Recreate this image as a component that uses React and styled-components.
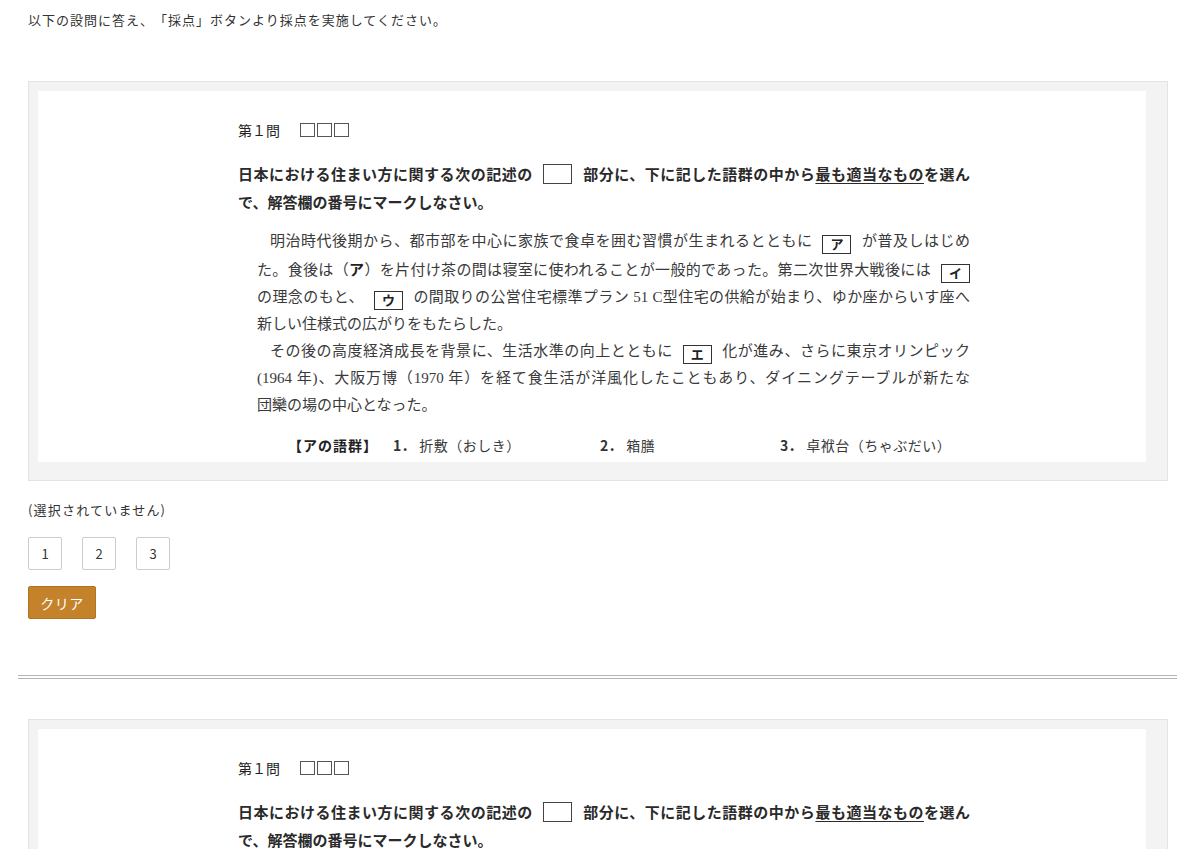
import React from "react";
import styled, { createGlobalStyle } from "styled-components";

const GlobalStyle = createGlobalStyle`
  body {
    margin: 8px;
    background: #fff;
    color: #333;
    font-family: "Noto Sans CJK JP", "Liberation Sans", sans-serif;
    text-spacing-trim: space-all;
  }
  * { box-sizing: border-box; }
`;

const Page = styled.div`
  padding: 0 16px 0 20px;
`;

const Lead = styled.p`
  margin: 0;
  font-size: 13px;
  line-height: 24px;
  color: #333;
  letter-spacing: 1px;
`;

const Frame = styled.div`
  margin-top: ${(p) => p.$top}px;
  border: 1px solid #e3e3e3;
  background: #f3f3f3;
  padding: 9px 21px 18px 9px;
`;

const Sheet = styled.div`
  width: 1108px;
  height: 371px;
  background: #fff;
  padding: 27px 0 0 200px;
  overflow: hidden;
`;

const Column = styled.div`
  width: 732px;
`;

const Heading = styled.div`
  font-size: 14px;
  line-height: 24px;
  color: #222;
  display: flex;
  align-items: center;
`;

const Squares = styled.span`
  margin-left: 20px;
  display: inline-flex;
  gap: 2px;
`;

const Square = styled.span`
  display: block;
  width: 15px;
  height: 14px;
  border: 1px solid #555;
`;

const Instruction = styled.div`
  margin-top: 18px;
  font-size: 15px;
  line-height: 28px;
  font-weight: 700;
  color: #2a2a2a;
`;

const Line = styled.div`
  text-align: justify;
  text-align-last: ${(p) => (p.$full ? "justify" : "left")};
  padding-left: ${(p) => (p.$indent ? 13 : 0)}px;
`;

const Underline = styled.span`
  text-decoration: underline;
  text-underline-offset: 3px;
`;

const BlankBox = styled.span`
  display: inline-block;
  width: 29px;
  height: 20px;
  margin: 0 11px 0 10px;
  border: 1px solid #444;
  vertical-align: -4px;
`;

const Passage = styled.div`
  margin-top: 12px;
  margin-left: 19px;
  width: 713px;
  font-family: "Liberation Serif", "Noto Sans CJK JP", serif;
  font-size: 15px;
  line-height: 27px;
  color: #3a3a3a;
`;

const LabelBox = styled.span`
  display: inline-block;
  width: 29px;
  height: 19px;
  margin: 0 ${(p) => (p.$end ? 0 : 10)}px 0 10px;
  border: 1.5px solid #333;
  font-family: "Noto Sans CJK JP", sans-serif;
  font-weight: 700;
  font-size: 13px;
  line-height: 16px;
  text-align: center;
  text-align-last: center;
  color: #222;
  vertical-align: -3px;
`;

const Strong = styled.b`
  font-family: "Noto Sans CJK JP", sans-serif;
  font-weight: 700;
  color: #222;
`;

const WordGroup = styled.div`
  margin-top: 13px;
  margin-left: 50px;
  display: flex;
  font-size: 14px;
  line-height: 27px;
  color: #333;
`;

const GroupLabel = styled.span`
  width: 105px;
  font-weight: 700;
  letter-spacing: 1px;
  color: #222;
`;

const GroupItem = styled.span`
  width: ${(p) => p.$w}px;
  white-space: nowrap;
`;

const Num = styled.span`
  font-weight: 700;
  margin-right: 4px;
  color: #333;
`;

const Word = styled.span`
  font-family: "Liberation Serif", "Noto Sans CJK JP", serif;
  color: #3a3a3a;
  letter-spacing: 0.5px;
`;

const Status = styled.p`
  margin: 19px 0 0;
  font-size: 13px;
  line-height: 20px;
  color: #333;
  letter-spacing: 1.2px;
`;

const Choices = styled.div`
  margin-top: 17px;
  display: flex;
  gap: 20px;
`;

const ChoiceButton = styled.button`
  width: 34px;
  height: 33px;
  padding: 0;
  border: 1px solid #ccc;
  border-radius: 2px;
  background: #fff;
  font-family: "Noto Sans CJK JP", sans-serif;
  font-size: 13px;
  color: #333;
`;

const ClearButton = styled.button`
  display: block;
  margin-top: 16px;
  width: 68px;
  height: 33px;
  padding: 0;
  border: 1px solid #b0731f;
  border-radius: 2px;
  background: #c4822b;
  font-family: "Noto Sans CJK JP", sans-serif;
  font-size: 14px;
  letter-spacing: 0.5px;
  color: #fff;
`;

const Divider = styled.hr`
  margin: 56px -9px 0 -10px;
  height: 4px;
  border: 0;
  border-top: 1px solid #b4b4b4;
  border-bottom: 1px solid #b4b4b4;
`;

function Question({ top }) {
  return (
    <Frame $top={top}>
      <Sheet>
        <Column>
          <Heading>
            第１問
            <Squares>
              <Square />
              <Square />
              <Square />
            </Squares>
          </Heading>
          <Instruction>
            <Line $full>
              日本における住まい方に関する次の記述の<BlankBox />部分に、下に記した語群の中から
              <Underline>最も適当なもの</Underline>を選ん
            </Line>
            <Line>で、解答欄の番号にマークしなさい。</Line>
          </Instruction>
          <Passage>
            <Line $full $indent>
              明治時代後期から、都市部を中心に家族で食卓を囲む習慣が生まれるとともに
              <LabelBox>ア</LabelBox>が普及しはじめ
            </Line>
            <Line $full>
              た。食後は（<Strong>ア</Strong>）を片付け茶の間は寝室に使われることが一般的であった。第二次世界大戦後には
              <LabelBox $end>イ</LabelBox>
            </Line>
            <Line $full>
              の理念のもと、<LabelBox>ウ</LabelBox>の間取りの公営住宅標準プラン 51 C型住宅の供給が始まり、ゆか座からいす座へ
            </Line>
            <Line>新しい住様式の広がりをもたらした。</Line>
            <Line $full $indent>
              その後の高度経済成長を背景に、生活水準の向上とともに<LabelBox>エ</LabelBox>化が進み、さらに東京オリンピック
            </Line>
            <Line $full>
              (1964 年)、大阪万博（1970 年）を経て食生活が洋風化したこともあり、ダイニングテーブルが新たな
            </Line>
            <Line>団欒の場の中心となった。</Line>
          </Passage>
          <WordGroup>
            <GroupLabel>【アの語群】</GroupLabel>
            <GroupItem $w={207}>
              <Num>1．</Num>
              <Word>折敷（おしき）</Word>
            </GroupItem>
            <GroupItem $w={180}>
              <Num>2．</Num>
              <Word>箱膳</Word>
            </GroupItem>
            <GroupItem $w={190}>
              <Num>3．</Num>
              <Word>卓袱台（ちゃぶだい）</Word>
            </GroupItem>
          </WordGroup>
        </Column>
      </Sheet>
    </Frame>
  );
}

function AnswerArea() {
  return (
    <>
      <Status>(選択されていません)</Status>
      <Choices>
        {["1", "2", "3"].map((n) => (
          <ChoiceButton key={n}>{n}</ChoiceButton>
        ))}
      </Choices>
      <ClearButton>クリア</ClearButton>
    </>
  );
}

export default function App() {
  return (
    <Page>
      <GlobalStyle />
      <Lead>以下の設問に答え、「採点」ボタンより採点を実施してください。</Lead>
      <Question top={49} />
      <AnswerArea />
      <Divider />
      <Question top={40} />
      <AnswerArea />
    </Page>
  );
}
